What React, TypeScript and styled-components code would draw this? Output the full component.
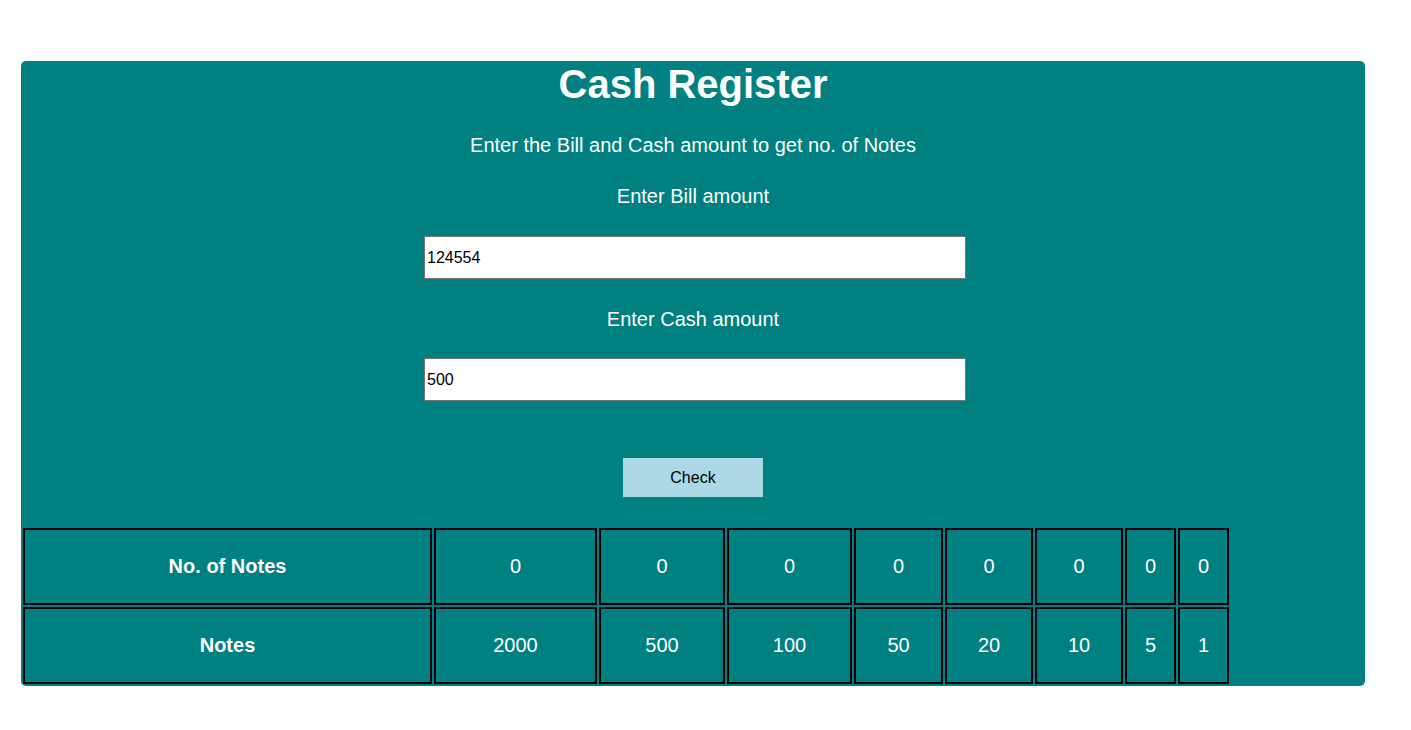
import React from "react";
import styled, { createGlobalStyle } from "styled-components";

const GlobalStyle = createGlobalStyle`
  html, body {
    margin: 0;
    padding: 0;
    background: #ffffff;
    font-family: "Liberation Sans", Arial, sans-serif;
  }
  * { box-sizing: border-box; }
`;

const Panel = styled.main`
  margin: 61px 0 0 21px;
  width: 1344px;
  background: #008080;
  border-radius: 5px;
  display: flex;
  flex-direction: column;
  align-items: center;
  color: #ffffff;
  overflow: hidden;
`;

const Title = styled.h1`
  margin: 0;
  font-size: 40px;
  line-height: 46px;
  font-weight: 700;
`;

const Text = styled.p<{ $top: number }>`
  margin: ${(p) => p.$top}px 0 0;
  font-size: 20px;
  line-height: 23px;
`;

const Field = styled.input<{ $top: number }>`
  margin: ${(p) => p.$top}px 0 0 4px;
  width: 542px;
  height: 43px;
  padding: 1px 2px;
  border: 1px solid #767676;
  background: #ffffff;
  color: #000000;
  font-family: "Liberation Sans", Arial, sans-serif;
  font-size: 16px;
  outline: none;
`;

const CheckButton = styled.button`
  margin-top: 57px;
  width: 140px;
  height: 39px;
  border: none;
  background: #add8e6;
  color: #000000;
  font-family: "Liberation Sans", Arial, sans-serif;
  font-size: 16px;
  cursor: pointer;
`;

const NotesTable = styled.table`
  align-self: flex-start;
  margin-top: 29px;
  width: 1210px;
  table-layout: fixed;
  border-collapse: separate;
  border-spacing: 2px;
`;

const Cell = styled.td<{ $w: number; $head?: boolean }>`
  width: ${(p) => p.$w}px;
  height: 77px;
  border: 2px solid #000000;
  padding: 0;
  text-align: center;
  vertical-align: middle;
  font-size: 20px;
  font-weight: ${(p) => (p.$head ? 700 : 400)};
  color: #ffffff;
`;

const widths = [409, 163, 126, 125, 89, 88, 88, 51, 51];
const notes = [2000, 500, 100, 50, 20, 10, 5, 1];

export default function App() {
  return (
    <>
      <GlobalStyle />
      <Panel>
        <Title>Cash Register</Title>
        <Text $top={27}>Enter the Bill and Cash amount to get no. of Notes</Text>
        <Text $top={28}>Enter Bill amount</Text>
        <Field $top={28} type="text" defaultValue="124554" />
        <Text $top={29}>Enter Cash amount</Text>
        <Field $top={27} type="text" defaultValue="500" />
        <CheckButton>Check</CheckButton>
        <NotesTable>
          <tbody>
            <tr>
              <Cell $w={widths[0]} $head>
                No. of Notes
              </Cell>
              {notes.map((n, i) => (
                <Cell key={n} $w={widths[i + 1]}>
                  0
                </Cell>
              ))}
            </tr>
            <tr>
              <Cell $w={widths[0]} $head>
                Notes
              </Cell>
              {notes.map((n, i) => (
                <Cell key={n} $w={widths[i + 1]}>
                  {n}
                </Cell>
              ))}
            </tr>
          </tbody>
        </NotesTable>
      </Panel>
    </>
  );
}
